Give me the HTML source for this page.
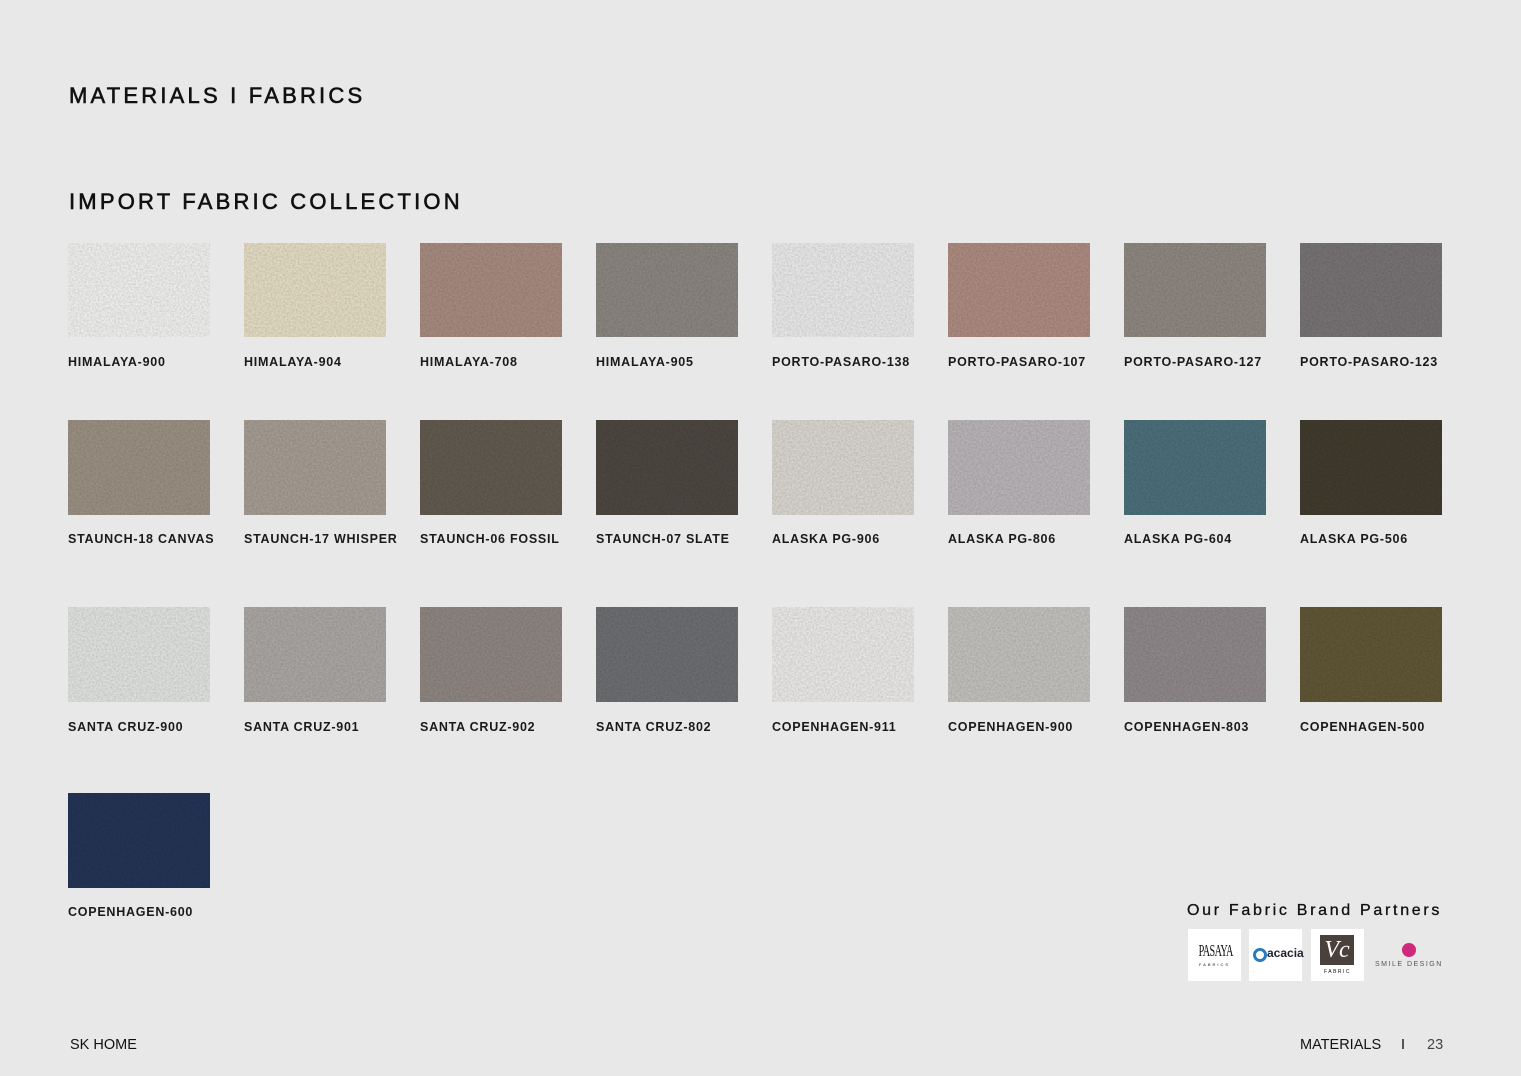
<!DOCTYPE html>
<html><head><meta charset="utf-8"><style>
*{margin:0;padding:0;box-sizing:border-box}
body{width:1521px;height:1076px;background:#e8e8e8;font-family:"Liberation Sans",sans-serif;position:relative;overflow:hidden;color:#111}
.t{position:absolute;white-space:nowrap}
.h1{left:69px;top:83px;font-size:22px;letter-spacing:3.2px;-webkit-text-stroke:0.6px #111}
.h2{left:69px;top:189px;font-size:22px;letter-spacing:3.2px;-webkit-text-stroke:0.6px #111}
.lb{font-size:12.5px;font-weight:bold;letter-spacing:0.75px;color:#1a1a1a}
.logo{position:absolute;top:929px;width:53px;height:52px;background:#fff}
</style></head><body>
<div class="t h1">MATERIALS I FABRICS</div>
<div class="t h2">IMPORT FABRIC COLLECTION</div>
<svg width="1521" height="1076" style="position:absolute;left:0;top:0">
<defs>
<filter id="n" x="0" y="0" width="100%" height="100%"><feTurbulence type="fractalNoise" baseFrequency="0.55" numOctaves="2" seed="3"/><feColorMatrix type="matrix" values="0 0 0 0 0  0 0 0 0 0  0 0 0 0 0  0 0 0 -1.6 1.2"/></filter>
</defs>
<g id="sw"></g>
</svg>
<div id="labels"></div>
<div class="t" style="left:1187px;top:902px;font-size:16px;letter-spacing:2.7px;-webkit-text-stroke:0.3px #111">Our Fabric Brand Partners</div>
<div class="logo" style="left:1188px"><div style="position:absolute;left:0;width:53px;top:12px;text-align:center;font-family:'Liberation Serif',serif;font-size:17px;transform:scaleX(0.6);letter-spacing:-1px">PASAYA</div><div style="position:absolute;width:53px;top:33px;text-align:center;font-size:4px;letter-spacing:2px">FABRICS</div></div>
<div class="logo" style="left:1249px"><div style="position:absolute;left:4px;top:19px;width:14px;height:14px;border:3px solid #2a7bbd;border-radius:50%"></div><div style="position:absolute;left:18px;top:17px;font-size:12px;font-weight:bold;color:#223">acacia</div></div>
<div class="logo" style="left:1311px"><div style="position:absolute;left:9px;top:6px;width:34px;height:30px;background:#4a403c;color:#fff;font-family:'Liberation Serif',serif;font-style:italic;font-size:24px;text-align:center;line-height:30px">Vc</div><div style="position:absolute;width:53px;top:40px;text-align:center;font-size:5px;letter-spacing:1.5px">FABRIC</div></div>
<div style="position:absolute;left:1402px;top:943px;width:14px;height:14px;border-radius:50%;background:#d0287a"></div>
<div class="t" style="left:1375px;top:961px;font-size:7px;letter-spacing:1.5px;color:#555">SMILE DESIGN</div>
<div class="t" style="left:70px;top:1037px;font-size:14.5px">SK HOME</div>
<div class="t" style="left:1300px;top:1037px;font-size:14.5px">MATERIALS</div>
<div class="t" style="left:1401px;top:1037px;font-size:14.5px">I</div>
<div class="t" style="left:1427px;top:1037px;font-size:14.5px;color:#444">23</div>
<script>
var xs=[68,244,420,596,772,948,1124,1300];
var rows=[[243,361],[420,538],[607,726],[793,911]];
var d=[
[["HIMALAYA-900","#efefed"],["HIMALAYA-904","#e3dbc2"],["HIMALAYA-708","#a68a7f"],["HIMALAYA-905","#8a857f"],["PORTO-PASARO-138","#e9e8e9"],["PORTO-PASARO-107","#ad8b80"],["PORTO-PASARO-127","#8d8780"],["PORTO-PASARO-123","#777374"]],
[["STAUNCH-18 CANVAS","#9a8f82"],["STAUNCH-17 WHISPER","#a59c92"],["STAUNCH-06 FOSSIL","#625a4f"],["STAUNCH-07 SLATE","#4d4741"],["ALASKA PG-906","#d9d5d0"],["ALASKA PG-806","#b8b4b7"],["ALASKA PG-604","#4b6f7a"],["ALASKA PG-506","#403b2d"]],
[["SANTA CRUZ-900","#dfe2de"],["SANTA CRUZ-901","#a9a6a3"],["SANTA CRUZ-902","#8e8580"],["SANTA CRUZ-802","#6d6e71"],["COPENHAGEN-911","#e9e8e6"],["COPENHAGEN-900","#c2c0bc"],["COPENHAGEN-803","#8e888b"],["COPENHAGEN-500","#605636"]],
[["COPENHAGEN-600","#243456"]]];
var g=document.getElementById('sw'),s='',l='';
d.forEach(function(r,i){r.forEach(function(c,j){var x=xs[j],y=rows[i][0],h=(i==0?94:95);
s+='<rect x="'+x+'" y="'+y+'" width="142" height="'+h+'" fill="'+c[1]+'"/><rect x="'+x+'" y="'+y+'" width="142" height="'+h+'" filter="url(#n)" opacity="0.14"/>';
l+='<div class="t lb" style="left:'+x+'px;top:'+(rows[i][1]-6)+'px">'+c[0]+'</div>';});});
g.innerHTML=s;document.getElementById('labels').innerHTML=l;
</script>
</body></html>
